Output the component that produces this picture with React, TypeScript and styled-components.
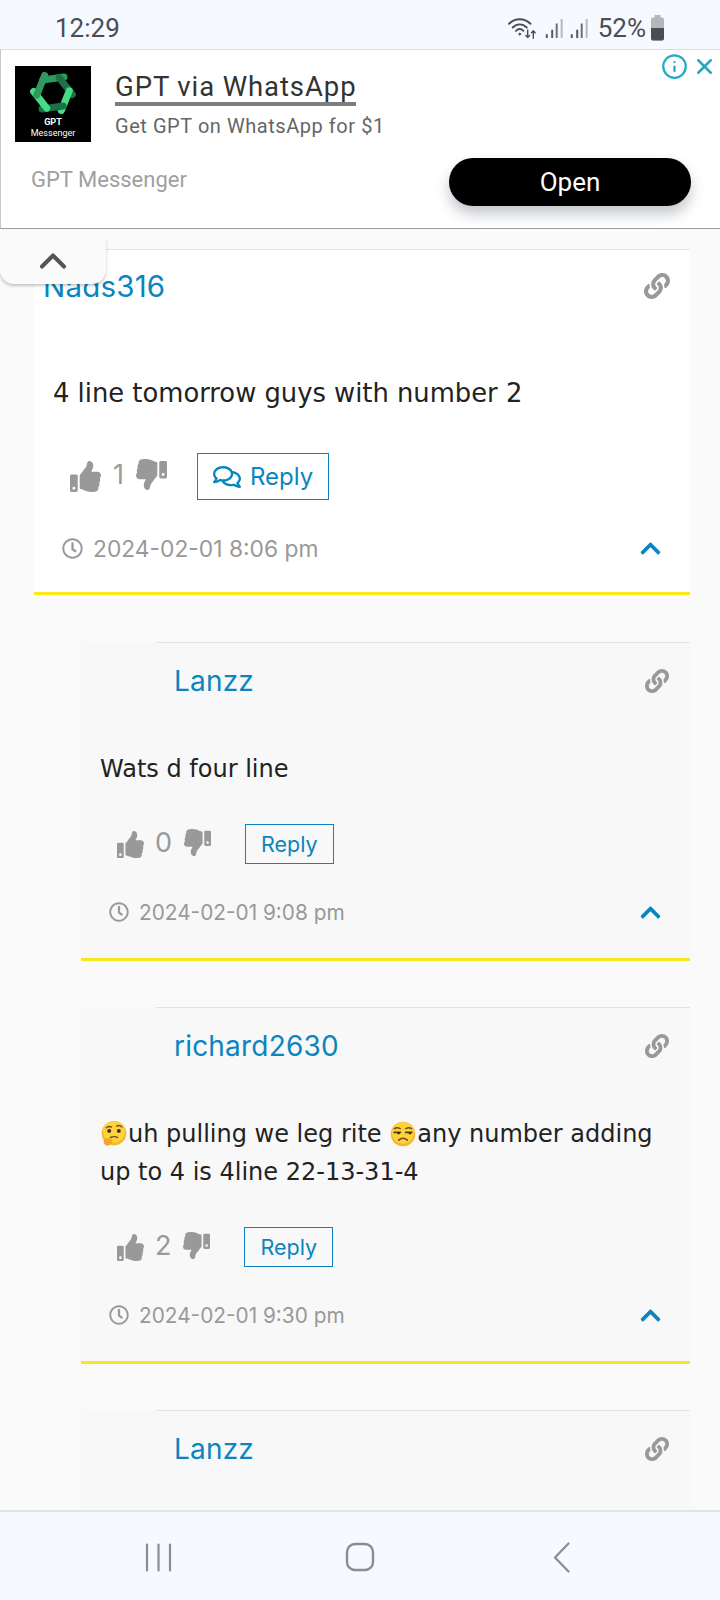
import React from "react";
import styled, { createGlobalStyle } from "styled-components";
import { FaThumbsUp, FaThumbsDown, FaLink, FaRegClock, FaRegComments, FaChevronUp } from "react-icons/fa";
import { ChevronUp, Info, X } from "lucide-react";

const GlobalStyle = createGlobalStyle`
  html, body {
    margin: 0;
    padding: 0;
    background: #fafafa;
  }
  * {
    box-sizing: border-box;
  }
`;

const BLUE = "#0a85bf";
const GREY = "#999999";

const Screen = styled.div`
  width: 720px;
  height: 1600px;
  display: flex;
  flex-direction: column;
  overflow: hidden;
  font-family: Inter, "Liberation Sans", sans-serif;
`;

const StatusBar = styled.div`
  height: 49px;
  flex: none;
  display: flex;
  align-items: center;
  justify-content: space-between;
  padding: 6px 55px 0 55px;
  background: #f6f9ff;
  color: #4a4d52;
  font-family: Roboto, sans-serif;
  font-size: 26px;
`;

const StatusRight = styled.div`
  display: flex;
  align-items: center;
  gap: 7px;
`;

const Percent = styled.span`
  margin-left: 3px;
  margin-right: -3px;
`;

const AdBanner = styled.div`
  position: relative;
  height: 180px;
  flex: none;
  background: #fff;
  border-top: 1px solid #d8dbe0;
  border-bottom: 1px solid #9a9a9a;
  border-left: 1px solid #c8c8c8;
  padding: 16px 29px 0 14px;
  z-index: 2;
`;

const AdTop = styled.div`
  display: flex;
  gap: 24px;
`;

const AdLogo = styled.div`
  width: 76px;
  height: 76px;
  background: #000;
  color: #fff;
  display: flex;
  flex-direction: column;
  align-items: center;
  font-family: Roboto, sans-serif;
  font-size: 9px;
  line-height: 11px;
  padding-top: 3px;
`;

const AdTitle = styled.div`
  display: inline-block;
  margin-top: 6px;
  font-family: Roboto, sans-serif;
  font-size: 27.5px;
  line-height: 30px;
  color: #333;
  letter-spacing: 0.9px;
  border-bottom: 4px solid #7d7d7d;
`;

const AdSub = styled.div`
  margin-top: 8px;
  font-family: Roboto, sans-serif;
  font-size: 20px;
  line-height: 24px;
  color: #666;
  letter-spacing: 0.55px;
`;

const AdBottom = styled.div`
  display: flex;
  align-items: center;
  justify-content: space-between;
  margin-top: 16px;
  padding-left: 16px;
`;

const AdBrand = styled.div`
  font-family: Roboto, sans-serif;
  font-size: 22px;
  color: #a0a0a0;
  margin-bottom: 6px;
`;

const OpenButton = styled.div`
  width: 242px;
  height: 48px;
  border-radius: 24px;
  background: #000;
  color: #fff;
  display: flex;
  align-items: center;
  justify-content: center;
  font-family: Roboto, sans-serif;
  font-size: 26px;
  box-shadow: 0 8px 14px rgba(40, 50, 70, 0.28);
`;

const AdControls = styled.div`
  position: absolute;
  top: 3px;
  right: 3px;
  display: flex;
  align-items: center;
  gap: 4px;
  color: #22a9c4;
`;

const Content = styled.div`
  position: relative;
  flex: 1;
  min-height: 0;
  overflow: hidden;
  background: #fafafa;
  padding: 20px 30px 0 34px;
  display: flex;
  flex-direction: column;
  gap: 46px;
`;

const CollapseTab = styled.div`
  position: absolute;
  top: 8px;
  left: 0;
  width: 106px;
  height: 47px;
  background: #fafafa;
  border-radius: 0 4px 14px 14px;
  box-shadow: 0 2px 3px rgba(0, 0, 0, 0.22);
  display: flex;
  align-items: center;
  justify-content: center;
  color: #555;
  z-index: 1;
`;

const Card = styled.div<{ $nested?: boolean; $cut?: boolean }>`
  flex: ${(p) => (p.$cut ? "1" : "none")};
  margin-left: ${(p) => (p.$nested ? "47px" : "0")};
  margin-bottom: ${(p) => (p.$nested ? "0" : "1px")};
  background: ${(p) => (p.$nested ? "#f8f8f8" : "#fff")};
  border-bottom: ${(p) => (p.$cut ? "none" : "3px solid #f9e71e")};
`;

const CardHeader = styled.div<{ $nested?: boolean }>`
  height: ${(p) => (p.$nested ? "77px" : "73px")};
  margin-left: ${(p) => (p.$nested ? "75px" : "0")};
  margin-bottom: 1px;
  padding: ${(p) => (p.$nested ? "0 21px 0 18px" : "0 20px 0 9px")};
  border-top: 1px solid #e2e2e2;
  display: flex;
  align-items: center;
  justify-content: space-between;
  color: #999;
`;

const Name = styled.div<{ $nested?: boolean }>`
  color: ${BLUE};
  font-size: ${(p) => (p.$nested ? "28px" : "29.5px")};
  letter-spacing: 0.2px;
`;

const CardBody = styled.div<{ $nested?: boolean }>`
  padding: ${(p) => (p.$nested ? "30px 19px 0" : "51px 19px 0")};
  font-family: "DejaVu Sans", sans-serif;
  font-size: ${(p) => (p.$nested ? "24px" : "25.8px")};
  line-height: 38px;
  color: #222;
`;

const Emoji = styled.svg`
  width: 28px;
  height: 28px;
  vertical-align: -6px;
`;

const Actions = styled.div<{ $nested?: boolean }>`
  display: flex;
  align-items: center;
  height: ${(p) => (p.$nested ? "40px" : "47px")};
  margin-top: ${(p) => (p.$nested ? "36px" : "41px")};
  padding-left: 36px;
  color: ${GREY};
`;

const Count = styled.span<{ $nested?: boolean }>`
  font-size: 27px;
  margin: 0 12px 4px ${(p) => (p.$nested ? "11px" : "12px")};
`;

const ThumbDown = styled.span`
  display: flex;
  margin-bottom: 4px;
  transform: scaleX(-1);
`;

const ThumbUp = styled.span`
  display: flex;
`;

const ReplyButton = styled.div<{ $nested?: boolean }>`
  height: 100%;
  margin-left: ${(p) => (p.$nested ? "34px" : "30px")};
  padding: 0 15px;
  display: flex;
  align-items: center;
  gap: 9px;
  border: 1px solid ${BLUE};
  color: ${BLUE};
  font-size: ${(p) => (p.$nested ? "21.5px" : "24px")};
`;

const Meta = styled.div<{ $nested?: boolean }>`
  height: 24px;
  margin-top: 36px;
  margin-bottom: ${(p) => (p.$nested ? "34px" : "32px")};
  padding: 0 28px 0 28px;
  display: flex;
  align-items: center;
  color: ${GREY};
  font-size: ${(p) => (p.$nested ? "20.8px" : "22.8px")};
`;

const MetaDate = styled.span`
  margin-left: 10px;
  flex: 1;
`;

const Toggle = styled.span`
  display: flex;
  color: ${BLUE};
`;

const NavBar = styled.div`
  height: 90px;
  flex: none;
  background: #f6f9ff;
  border-top: 2px solid #e0e4ea;
  display: grid;
  grid-template-columns: 1fr 1fr 1fr;
  align-items: center;
  justify-items: center;
  padding: 2px 58px 0;
  color: #8a8d92;
`;

function WifiIcon() {
  return (
    <svg width="30" height="26" viewBox="0 0 32 26" fill="none" stroke="#4a4d52" strokeWidth="2" strokeLinecap="round">
      <path d="M1 8.5C7.5 2 17.5 2 24 8.5" />
      <path d="M5 12.5C9.5 8 15.500 8 20 12.5" />
      <path d="M8.5 16C11 13.500 14 13.500 16.5 16" />
      <circle cx="12.5" cy="19.5" r="1" fill="#4a4d52" strokeWidth="1" />
      <path d="M21 15v8M19 21l2 2 2-2M27 24v-8M25 18l2-2 2 2" strokeWidth="1.5" />
    </svg>
  );
}

function SignalIcon() {
  return (
    <svg width="18" height="24" viewBox="0 0 20 24" fill="none" strokeWidth="2.2">
      <path d="M2 23v-4M8 23v-9" stroke="#55585d" />
      <path d="M13 23V7" stroke="#6b6e73" />
      <path d="M18.5 23V2" stroke="#b5b8bc" />
    </svg>
  );
}

function BatteryIcon() {
  return (
    <svg width="15" height="26" viewBox="0 0 15 26">
      <rect x="4.5" y="0" width="6" height="3" fill="#b4b6ba" />
      <rect x="1" y="2.5" width="13" height="23" rx="2" fill="#b4b6ba" />
      <path d="M1 13h13v10.5a2 2 0 0 1-2 2H3a2 2 0 0 1-2-2z" fill="#4a4d52" />
    </svg>
  );
}

const ARMS = [
  { angle: 0, color: "#2f9a5d" },
  { angle: 60, color: "#1d6f45" },
  { angle: 120, color: "#46dc86" },
  { angle: 180, color: "#1d6f45" },
  { angle: 240, color: "#46dc86" },
  { angle: 300, color: "#2f9a5d" },
];

function GptLogo() {
  return (
    <svg width="46" height="48" viewBox="0 0 46 48" fill="none" strokeLinecap="round">
      {ARMS.map((arm) => (
        <path
          key={arm.angle}
          d="M13 11 L34 8"
          stroke={arm.color}
          strokeWidth="7"
          transform={`rotate(${arm.angle} 23 24)`}
        />
      ))}
    </svg>
  );
}

function ThinkingEmoji() {
  return (
    <Emoji viewBox="0 0 32 32">
      <circle cx="16" cy="15" r="14" fill="#f7b52b" />
      <circle cx="16" cy="13.500" r="12.500" fill="#fdd23c" />
      <path d="M7 9c2-2 4-2 6-1M19 7c2-1 4-1 6 1" stroke="#6d4c1f" strokeWidth="1.6" fill="none" strokeLinecap="round" />
      <circle cx="10.5" cy="12.5" r="2.2" fill="#3e2a14" />
      <circle cx="21.5" cy="12.5" r="2.2" fill="#3e2a14" />
      <path d="M12 20c3-1.500 6-1 8 0" stroke="#6d4c1f" strokeWidth="1.6" fill="none" strokeLinecap="round" />
      <path d="M5 22c2-2 5-1 8 0 2 .7 2 2.500 0 2.500 1 1 1 2.500-1 3-1 2-5 3-7 0-1-2-1-4 0-5.500z" fill="#f5a623" />
    </Emoji>
  );
}

function UnamusedEmoji() {
  return (
    <Emoji viewBox="0 0 32 32">
      <circle cx="16" cy="16" r="14" fill="#f7b52b" />
      <circle cx="16" cy="14.500" r="12.500" fill="#fdd23c" />
      <path d="M6 10c2-1.500 4.500-1.500 7 0M19 10c2.500-1.500 5-1.500 7 0" stroke="#6d4c1f" strokeWidth="1.5" fill="none" strokeLinecap="round" />
      <path d="M6 14h7M19 14h7" stroke="#5a3c18" strokeWidth="2" strokeLinecap="round" />
      <circle cx="11" cy="15" r="1.400" fill="#3e2a14" />
      <circle cx="24" cy="15" r="1.400" fill="#3e2a14" />
      <path d="M11 23c3-2.500 7-2.500 10 0" stroke="#6d4c1f" strokeWidth="1.800" fill="none" strokeLinecap="round" />
    </Emoji>
  );
}

type CommentProps = {
  name: string;
  likes?: number;
  date?: string;
  nested?: boolean;
  children?: React.ReactNode;
};

function Comment({ name, likes, date, nested, children }: CommentProps) {
  // the last comment runs under the nav bar, only its header is on screen
  const cut = date === undefined;
  return (
    <Card $nested={nested} $cut={cut}>
      <CardHeader $nested={nested}>
        <Name $nested={nested}>{name}</Name>
        <FaLink size={nested ? 24 : 26} />
      </CardHeader>
      {!cut && (
        <>
          <CardBody $nested={nested}>{children}</CardBody>
          <Actions $nested={nested}>
            <ThumbUp>
              <FaThumbsUp size={nested ? 27 : 31} />
            </ThumbUp>
            <Count $nested={nested}>{likes}</Count>
            <ThumbDown>
              <FaThumbsDown size={nested ? 27 : 31} />
            </ThumbDown>
            <ReplyButton $nested={nested}>
              {!nested && <FaRegComments size={28} />}
              Reply
            </ReplyButton>
          </Actions>
          <Meta $nested={nested}>
            <FaRegClock size={nested ? 20 : 21} />
            <MetaDate>{date}</MetaDate>
            <Toggle>
              <FaChevronUp size={23} />
            </Toggle>
          </Meta>
        </>
      )}
    </Card>
  );
}

export default function App() {
  return (
    <>
      <GlobalStyle />
      <Screen>
        <StatusBar>
          <span>12:29</span>
          <StatusRight>
            <WifiIcon />
            <SignalIcon />
            <SignalIcon />
            <Percent>52%</Percent>
            <BatteryIcon />
          </StatusRight>
        </StatusBar>

        <AdBanner>
          <AdControls>
            <Info size={27} strokeWidth={2} />
            <X size={25} strokeWidth={2.4} />
          </AdControls>
          <AdTop>
            <AdLogo>
              <GptLogo />
              <strong>GPT</strong>
              <span>Messenger</span>
            </AdLogo>
            <div>
              <AdTitle>GPT via WhatsApp</AdTitle>
              <AdSub>Get GPT on WhatsApp for $1</AdSub>
            </div>
          </AdTop>
          <AdBottom>
            <AdBrand>GPT Messenger</AdBrand>
            <OpenButton>Open</OpenButton>
          </AdBottom>
        </AdBanner>

        <Content>
          <CollapseTab>
            <ChevronUp size={44} strokeWidth={2.2} />
          </CollapseTab>

          <Comment name="Nads316" likes={1} date="2024-02-01 8:06 pm">
            4 line tomorrow guys with number 2
          </Comment>

          <Comment nested name="Lanzz" likes={0} date="2024-02-01 9:08 pm">
            Wats d four line
          </Comment>

          <Comment nested name="richard2630" likes={2} date="2024-02-01 9:30 pm">
            <ThinkingEmoji />uh pulling we leg rite <UnamusedEmoji />any number adding up to 4 is 4line 22-13-31-4
          </Comment>

          <Comment nested name="Lanzz" />
        </Content>

        <NavBar>
          <svg width="27" height="29" viewBox="0 0 27 29" stroke="currentColor" strokeWidth="2.2" strokeLinecap="round">
            <path d="M2 1.500v26M13.500 1.500v26M25 1.500v26" />
          </svg>
          <svg width="30" height="30" viewBox="0 0 30 30" fill="none" stroke="currentColor" strokeWidth="2.4">
            <rect x="2" y="2" width="26" height="26" rx="8" />
          </svg>
          <svg width="17" height="31" viewBox="0 0 17 31" fill="none" stroke="currentColor" strokeWidth="2.2" strokeLinecap="round" strokeLinejoin="round">
            <path d="M15.500 1.500 L2 15.500 L15.500 29.500" />
          </svg>
        </NavBar>
      </Screen>
    </>
  );
}
